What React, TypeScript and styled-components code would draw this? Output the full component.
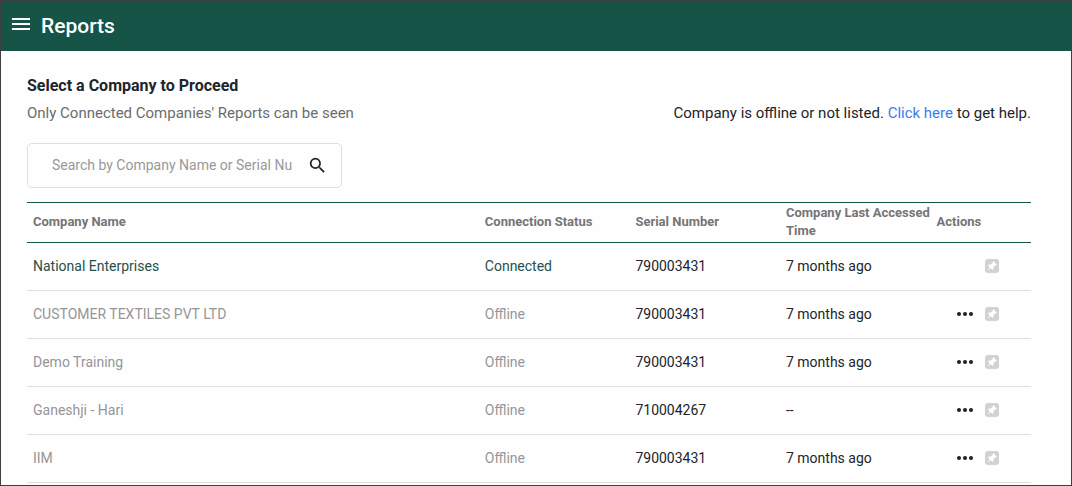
import React from "react";
import styled, { createGlobalStyle } from "styled-components";

const GlobalStyle = createGlobalStyle`
  *, *::before, *::after { box-sizing: border-box; }
  body {
    margin: 0;
    background: #fefefe;
    color: #212529;
    font-family: Roboto, "Liberation Sans", sans-serif;
    font-size: 15px;
    line-height: 18px;
  }
  button, input { font: inherit; }
`;

const Page = styled.div`
  min-height: 100vh;
  border: 1px solid #3f3f3f;
`;

const TopBar = styled.header`
  display: flex;
  align-items: center;
  gap: 10px;
  height: 50px;
  padding: 0 10px;
  background: #155446;
  color: #fff;
`;

const IconButton = styled.button`
  display: flex;
  align-items: center;
  justify-content: center;
  padding: 0;
  border: 0;
  background: none;
  color: inherit;
  cursor: pointer;
`;

const MenuButton = styled(IconButton)`
  padding-bottom: 4px;
`;

const Title = styled.h1`
  margin: 0;
  font-size: 21px;
  font-weight: 500;
  line-height: 24px;
`;

const Content = styled.main`
  padding: 26px 40px 0 26px;
`;

const Heading = styled.h2`
  margin: 0 0 9px;
  font-size: 16px;
  font-weight: 700;
  line-height: 18px;
`;

const IntroRow = styled.div`
  display: flex;
  justify-content: space-between;
  gap: 24px;
`;

const Intro = styled.p<{ $muted?: boolean }>`
  margin: 0;
  color: ${(p) => (p.$muted ? "#6c6c6c" : "#212529")};
`;

const HelpLink = styled.a`
  color: #3b7ded;
  text-decoration: none;
`;

const SearchBox = styled.form`
  display: flex;
  align-items: center;
  justify-content: space-between;
  width: 315px;
  height: 45px;
  margin: 21px 0 14px;
  padding: 0 15px 0 24px;
  border: 1px solid #dedede;
  border-radius: 5px;
`;

const SearchInput = styled.input`
  width: 240px;
  padding: 0 0 2px;
  border: 0;
  outline: 0;
  background: none;
  color: #212529;
  font-size: 14px;
  &::placeholder { color: #999; opacity: 1; }
`;

const Table = styled.table`
  width: 100%;
  table-layout: fixed;
  border-collapse: separate;
  border-spacing: 0;
  font-size: 13px;
`;

const HeadCell = styled.th<{ $width: number }>`
  width: ${(p) => p.$width}%;
  height: 41px;
  padding: 0 0 2px 6px;
  border-top: 1px solid #155446;
  border-bottom: 1px solid #155446;
  color: #757575;
  font-weight: 700;
  text-align: left;
`;

const Cell = styled.td<{ $tone?: "on" | "off" }>`
  height: 48px;
  padding: 0 0 2px 6px;
  border-bottom: 1px solid #dedede;
  font-size: 14px;
  color: ${(p) =>
    p.$tone === "on" ? "#27504a" : p.$tone === "off" ? "#969696" : "#212529"};
`;

const Actions = styled.div`
  display: flex;
  align-items: center;
  justify-content: flex-end;
  gap: 12px;
  padding-right: 32px;
`;

const PinButton = styled(IconButton)`
  width: 14px;
  height: 14px;
  border-radius: 3px;
  background: #d2d2d2;
  color: #fff;
`;

const MenuIcon = () => (
  <svg width="20" height="14" viewBox="0 0 20 14" aria-hidden="true">
    <path d="M1 1h18v2H1zM1 6h18v2H1zM1 11h18v2H1z" fill="currentColor" />
  </svg>
);

const SearchIcon = () => (
  <svg width="17" height="17" viewBox="2 2 20 20" aria-hidden="true">
    <path
      fill="#212121"
      d="M15.5 14h-.79l-.28-.27A6.47 6.47 0 0 0 16 9.5 6.5 6.5 0 1 0 9.5 16c1.61 0 3.09-.59 4.23-1.57l.27.28v.79l5 4.99L20.49 19l-4.99-5zm-6 0C7.01 14 5 11.99 5 9.5S7.01 5 9.5 5 14 7.01 14 9.5 11.99 14 9.5 14z"
    />
  </svg>
);

const DotsIcon = () => (
  <svg width="16" height="14" viewBox="0 0 16 14" aria-hidden="true" fill="#172026">
    <circle cx="2" cy="7" r="2" />
    <circle cx="8" cy="7" r="2" />
    <circle cx="14" cy="7" r="2" />
  </svg>
);

const PinIcon = () => (
  <svg width="14" height="14" viewBox="0 0 14 14" aria-hidden="true">
    <path
      fill="currentColor"
      d="M8.2 2 12 5.8 11 6.3 10.4 6.2 8.5 8.2 8.4 10.2 7.6 11 5.7 9.1 3 11.6 2.4 11 4.9 8.3 3 6.4 3.8 5.6 5.8 5.5 7.8 3.6 7.7 3Z"
    />
  </svg>
);

const columns = [
  { label: "Company Name", width: 45 },
  { label: "Connection Status", width: 15 },
  { label: "Serial Number", width: 15 },
  { label: "Company Last Accessed Time", width: 15 },
  { label: "Actions", width: 10 },
];

const companies = [
  { name: "National Enterprises", connected: true, serial: "790003431", accessed: "7 months ago" },
  { name: "CUSTOMER TEXTILES PVT LTD", connected: false, serial: "790003431", accessed: "7 months ago" },
  { name: "Demo Training", connected: false, serial: "790003431", accessed: "7 months ago" },
  { name: "Ganeshji - Hari", connected: false, serial: "710004267", accessed: "--" },
  { name: "IIM", connected: false, serial: "790003431", accessed: "7 months ago" },
];

export default function App() {
  return (
    <>
      <GlobalStyle />
      <Page>
        <TopBar>
          <MenuButton type="button" aria-label="Menu">
            <MenuIcon />
          </MenuButton>
          <Title>Reports</Title>
        </TopBar>
        <Content>
          <Heading>Select a Company to Proceed</Heading>
          <IntroRow>
            <Intro $muted>Only Connected Companies' Reports can be seen</Intro>
            <Intro>
              Company is offline or not listed. <HelpLink href="#help">Click here</HelpLink> to get help.
            </Intro>
          </IntroRow>
          <SearchBox role="search" onSubmit={(e) => e.preventDefault()}>
            <SearchInput
              type="text"
              aria-label="Search companies"
              placeholder="Search by Company Name or Serial Number"
            />
            <IconButton type="submit" aria-label="Search">
              <SearchIcon />
            </IconButton>
          </SearchBox>
          <Table>
            <thead>
              <tr>
                {columns.map((c) => (
                  <HeadCell key={c.label} $width={c.width} scope="col">
                    {c.label}
                  </HeadCell>
                ))}
              </tr>
            </thead>
            <tbody>
              {companies.map((c) => {
                const tone = c.connected ? "on" : "off";
                return (
                  <tr key={c.name}>
                    <Cell $tone={tone}>{c.name}</Cell>
                    <Cell $tone={tone}>{c.connected ? "Connected" : "Offline"}</Cell>
                    <Cell>{c.serial}</Cell>
                    <Cell>{c.accessed}</Cell>
                    <Cell>
                      <Actions>
                        {!c.connected && (
                          <IconButton type="button" aria-label={`More actions for ${c.name}`}>
                            <DotsIcon />
                          </IconButton>
                        )}
                        <PinButton type="button" aria-label={`Pin ${c.name}`}>
                          <PinIcon />
                        </PinButton>
                      </Actions>
                    </Cell>
                  </tr>
                );
              })}
            </tbody>
          </Table>
        </Content>
      </Page>
    </>
  );
}
